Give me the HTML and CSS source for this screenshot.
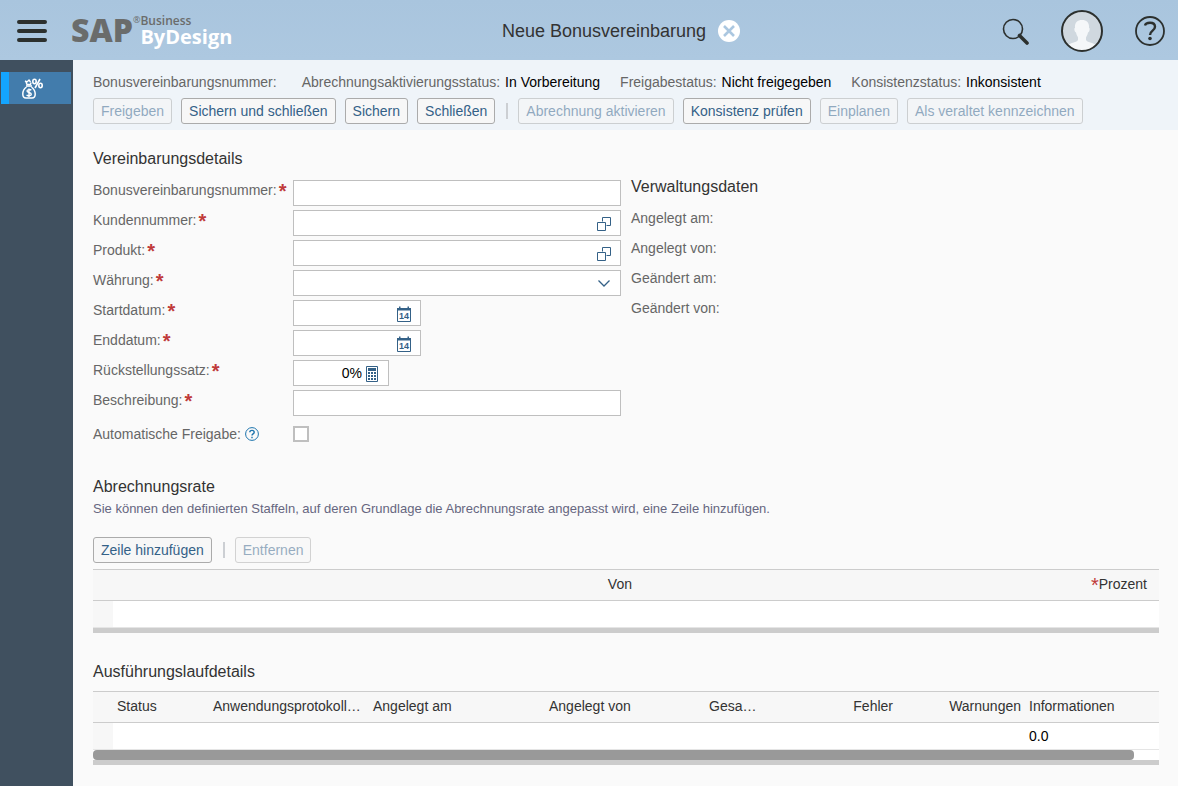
FILE: index.html
```
<!DOCTYPE html>
<html lang="de">
<head>
    <meta charset="UTF-8">
    <meta name="viewport" content="width=device-width, initial-scale=1.0">
    <title>Neue Bonusvereinbarung</title>
    <link rel="stylesheet" href="styles.css">
</head>
<body>
    <!-- Shared icons -->
    <svg class="icon-defs" width="0" height="0" aria-hidden="true">
        <symbol id="icon-value-help" viewBox="0 0 16 16">
            <path d="M6.500 5.500V1.500H14.500V9.500H10.500M1.500 6.500H9.500V14.500H1.500Z" fill="none" stroke="currentColor"/>
        </symbol>
        <symbol id="icon-calendar" viewBox="0 0 16 16">
            <path d="M1.500 2.500H14.500V15.500H1.500Z" fill="none" stroke="currentColor"/>
            <path d="M1 2H15V4.500H1ZM3 0.500H4.500V3H3ZM11.500 0.500H13V3H11.500Z" fill="currentColor"/>
        </symbol>
        <symbol id="icon-calculator" viewBox="0 0 12 16">
            <path d="M0.500 0.500H11.500V15.500H0.500Z" fill="none" stroke="currentColor"/>
            <path d="M2 2H10V5H2Z" fill="currentColor"/>
            <path d="M3 6V14M6 6V14M9 6V14" stroke="currentColor" stroke-width="2" stroke-dasharray="2 1"/>
        </symbol>
    </svg>

    <header class="topbar">
        <button class="icon-button menu-button" aria-label="Menü">
            <svg width="30" height="22" viewBox="0 0 30 22">
                <path d="M2 2H28M2 11H28M2 20H28" stroke="#2c302e" stroke-width="4" stroke-linecap="round"/>
            </svg>
        </button>
        <a class="logo" href="#">
            <span class="logo-sap">SAP</span>
            <span class="logo-reg">®</span>
            <span class="logo-product">
                <span class="logo-business">Business</span>
                <span class="logo-bydesign">ByDesign</span>
            </span>
        </a>
        <div class="page-title">
            <h1>Neue Bonusvereinbarung</h1>
            <button class="icon-button" aria-label="Seite schließen">
                <svg width="22" height="22" viewBox="0 0 22 22">
                    <circle cx="11" cy="11" r="11" fill="#fff"/>
                    <path d="M6 6L16 16M16 6L6 16" stroke="#abc7e0" stroke-width="2.600"/>
                </svg>
            </button>
        </div>
        <div class="topbar-actions">
            <button class="icon-button" aria-label="Suche">
                <svg width="28" height="28" viewBox="0 0 28 28">
                    <circle cx="12" cy="12" r="9.500" fill="none" stroke="#2c302e" stroke-width="1.600"/>
                    <path d="M18.500 18.500L26 26" stroke="#2c302e" stroke-width="3.600" stroke-linecap="round"/>
                </svg>
            </button>
            <button class="icon-button" aria-label="Benutzer">
                <svg width="42" height="42" viewBox="0 0 42 42">
                    <clipPath id="avatar-clip"><circle cx="21" cy="21" r="20"/></clipPath>
                    <circle cx="21" cy="21" r="20" fill="#d0d8df"/>
                    <path clip-path="url(#avatar-clip)" fill="#f5f7f9" d="M21 10C16 10 13.500 13 14 18C12.800 18 13.400 22 15 22.500C15.500 25 16.500 26 17 27.500V30C16 32.500 10 32 6 36V42H36V36C32 32 26 32.500 25 30V27.500C25.500 26 26.500 25 27 22.500C28.600 22 29.200 18 28 18C28.500 13 26 10 21 10Z"/>
                    <circle cx="21" cy="21" r="20" fill="none" stroke="#2c302e" stroke-width="2"/>
                </svg>
            </button>
            <button class="icon-button" aria-label="Hilfe">
                <svg width="30" height="30" viewBox="0 0 30 30">
                    <circle cx="15" cy="15" r="14" fill="none" stroke="#2c302e" stroke-width="1.800"/>
                    <path d="M10 9.500C10.500 7.500 12.500 6.800 15 6.800C18 6.800 20 8.300 20 10.800C20 14.800 15 14.500 15 19" fill="none" stroke="#2c302e" stroke-width="2.400"/>
                    <circle cx="15" cy="22.500" r="1.800" fill="#2c302e"/>
                </svg>
            </button>
        </div>
    </header>

    <div class="layout">
        <nav class="sidebar">
            <a class="sidebar-item" href="#" aria-label="Bonusvereinbarungen">
                <svg width="22" height="22" viewBox="0 0 22 22" fill="none" stroke="#fff">
                    <path d="M3 3L5 4L7 2L8.500 4M4 4L5 6.500H8.500L9 4.500" stroke-width="1.400"/>
                    <path d="M4 8H10" stroke-width="1.600"/>
                    <path d="M4.500 9C1.500 11 0.800 13.500 0.800 16C0.800 18.500 2 20 4 20H10C12 20 13.200 18.500 13.200 16C13.200 13.500 12 11 9.500 9" stroke-width="1.500"/>
                    <path d="M9.300 12.200C8.500 11.300 5 11.200 5 13C5 15 9.300 14 9.300 16.200C9.300 18.200 5.500 18 4.600 16.800M7 10.500V19" stroke-width="1.400"/>
                    <ellipse cx="12.500" cy="3.500" rx="1.700" ry="2.200" stroke-width="1.600"/>
                    <ellipse cx="18.500" cy="7.500" rx="1.700" ry="2.200" stroke-width="1.600"/>
                    <path d="M18 1L13 10" stroke-width="1.600"/>
                </svg>
            </a>
        </nav>

        <div class="page">
            <div class="toolbar">
                <dl class="status-list">
                    <div class="status"><dt>Bonusvereinbarungsnummer:</dt><dd></dd></div>
                    <div class="status"><dt>Abrechnungsaktivierungsstatus:</dt><dd>In Vorbereitung</dd></div>
                    <div class="status"><dt>Freigabestatus:</dt><dd>Nicht freigegeben</dd></div>
                    <div class="status"><dt>Konsistenzstatus:</dt><dd>Inkonsistent</dd></div>
                </dl>
                <div class="button-row">
                    <button class="btn" disabled>Freigeben</button>
                    <button class="btn">Sichern und schließen</button>
                    <button class="btn">Sichern</button>
                    <button class="btn">Schließen</button>
                    <span class="separator"></span>
                    <button class="btn" disabled>Abrechnung aktivieren</button>
                    <button class="btn">Konsistenz prüfen</button>
                    <button class="btn" disabled>Einplanen</button>
                    <button class="btn" disabled>Als veraltet kennzeichnen</button>
                </div>
            </div>

            <main class="content">
                <!-- Agreement details and administrative data -->
                <section class="details">
                    <form class="form">
                        <h2>Vereinbarungsdetails</h2>
                        <div class="form-row">
                            <label class="required" for="number">Bonusvereinbarungsnummer:</label>
                            <div class="field"><input type="text" id="number"></div>
                        </div>
                        <div class="form-row">
                            <label class="required" for="customer">Kundennummer:</label>
                            <div class="field">
                                <input type="text" id="customer">
                                <button type="button" class="field-button" aria-label="Kunde auswählen"><svg width="16" height="16"><use href="#icon-value-help"/></svg></button>
                            </div>
                        </div>
                        <div class="form-row">
                            <label class="required" for="product">Produkt:</label>
                            <div class="field">
                                <input type="text" id="product">
                                <button type="button" class="field-button" aria-label="Produkt auswählen"><svg width="16" height="16"><use href="#icon-value-help"/></svg></button>
                            </div>
                        </div>
                        <div class="form-row">
                            <label class="required" for="currency">Währung:</label>
                            <div class="field field-select">
                                <select id="currency"><option></option></select>
                                <svg width="12" height="8" viewBox="0 0 12 8"><path d="M0.500 1.500L6 7L11.500 1.500" fill="none" stroke="currentColor" stroke-width="1.300"/></svg>
                            </div>
                        </div>
                        <div class="form-row">
                            <label class="required" for="startDate">Startdatum:</label>
                            <div class="field field-date">
                                <input type="text" id="startDate">
                                <button type="button" class="field-button" aria-label="Startdatum auswählen">
                                    <svg class="calendar" width="16" height="16"><use href="#icon-calendar"/><text x="8" y="13" text-anchor="middle">14</text></svg>
                                </button>
                            </div>
                        </div>
                        <div class="form-row">
                            <label class="required" for="endDate">Enddatum:</label>
                            <div class="field field-date">
                                <input type="text" id="endDate">
                                <button type="button" class="field-button" aria-label="Enddatum auswählen">
                                    <svg class="calendar" width="16" height="16"><use href="#icon-calendar"/><text x="8" y="13" text-anchor="middle">14</text></svg>
                                </button>
                            </div>
                        </div>
                        <div class="form-row">
                            <label class="required" for="rate">Rückstellungssatz:</label>
                            <div class="field field-percent">
                                <input type="text" id="rate" value="0%">
                                <button type="button" class="field-button" aria-label="Rechner"><svg width="12" height="16"><use href="#icon-calculator"/></svg></button>
                            </div>
                        </div>
                        <div class="form-row">
                            <label class="required" for="description">Beschreibung:</label>
                            <div class="field"><input type="text" id="description"></div>
                        </div>
                        <div class="form-row form-row-check">
                            <div class="check-label">
                                <label for="autoRelease">Automatische Freigabe:</label>
                                <button type="button" class="icon-button" aria-label="Erklärung">
                                    <svg width="14" height="14" viewBox="0 0 14 14" fill="none" stroke="#1c74ad">
                                        <circle cx="7" cy="7" r="6.400"/>
                                        <path d="M4.800 5.200C4.800 2.700 9.200 2.700 9.200 5.200C9.200 7 7 6.800 7 8.600M7 9.700V11.200" stroke-width="1.400"/>
                                    </svg>
                                </button>
                            </div>
                            <input type="checkbox" id="autoRelease" class="checkbox">
                        </div>
                    </form>

                    <div class="admin-data">
                        <h2>Verwaltungsdaten</h2>
                        <dl>
                            <dt>Angelegt am:</dt>
                            <dt>Angelegt von:</dt>
                            <dt>Geändert am:</dt>
                            <dt>Geändert von:</dt>
                        </dl>
                    </div>
                </section>

                <!-- Settlement rate -->
                <section class="rates">
                    <h2>Abrechnungsrate</h2>
                    <p class="hint">Sie können den definierten Staffeln, auf deren Grundlage die Abrechnungsrate angepasst wird, eine Zeile hinzufügen.</p>
                    <div class="button-row">
                        <button class="btn">Zeile hinzufügen</button>
                        <span class="separator"></span>
                        <button class="btn" disabled>Entfernen</button>
                    </div>
                    <div class="table-wrap">
                        <table>
                            <colgroup>
                                <col class="col-handle">
                                <col>
                                <col>
                            </colgroup>
                            <thead>
                                <tr>
                                    <th></th>
                                    <th class="num">Von</th>
                                    <th class="num col-percent"><span class="star">*</span>Prozent</th>
                                </tr>
                            </thead>
                            <tbody>
                                <tr><td></td><td></td><td></td></tr>
                            </tbody>
                        </table>
                    </div>
                </section>

                <!-- Run details -->
                <section class="runs">
                    <h2>Ausführungslaufdetails</h2>
                    <div class="table-wrap">
                        <table>
                            <colgroup>
                                <col class="col-handle">
                                <col class="col-status">
                                <col class="col-log">
                                <col class="col-created-on">
                                <col class="col-created-by">
                                <col class="col-total">
                                <col class="col-errors">
                                <col class="col-warnings">
                                <col>
                            </colgroup>
                            <thead>
                                <tr>
                                    <th></th>
                                    <th>Status</th>
                                    <th>Anwendungsprotokoll…</th>
                                    <th>Angelegt am</th>
                                    <th>Angelegt von</th>
                                    <th>Gesa…</th>
                                    <th class="num">Fehler</th>
                                    <th class="num">Warnungen</th>
                                    <th>Informationen</th>
                                </tr>
                            </thead>
                            <tbody>
                                <tr><td></td><td></td><td></td><td></td><td></td><td></td><td></td><td></td><td>0.0</td></tr>
                            </tbody>
                        </table>
                        <div class="scrollbar"><div class="scrollbar-thumb"></div></div>
                    </div>
                </section>
            </main>
        </div>
    </div>
</body>
</html>
```
FILE: styles.css
```
* {
    box-sizing: border-box;
}

body {
    font-family: "Liberation Sans", Arial, sans-serif;
    font-size: 14px;
    line-height: 16px;
    background-color: #fafafa;
    margin: 0;
    color: #333;
    display: flex;
    flex-direction: column;
    min-height: 100vh;
}

h1, h2, p, dl, dd {
    margin: 0;
}

h1, h2 {
    font-weight: normal;
}

h2 {
    font-size: 16px;
    line-height: 20px;
}

button, input, select {
    font: inherit;
}

svg {
    display: block;
}

.icon-defs {
    position: absolute;
}

.icon-button {
    padding: 0;
    border: none;
    background: none;
    cursor: pointer;
}

/* Top bar */
.topbar {
    display: grid;
    grid-template-areas: "left title right";
    grid-template-columns: 1fr auto 1fr;
    align-items: center;
    height: 60px;
    padding: 1px 13px 0 17px;
    background: linear-gradient(#a9c5de, #adc8e0);
}

.menu-button {
    grid-area: left;
    justify-self: start;
}

.logo {
    grid-area: left;
    justify-self: start;
    display: flex;
    align-items: flex-start;
    margin-left: 54px;
    font-family: "Open Sans", sans-serif;
    color: #6a6c6b;
    text-decoration: none;
}

.logo-sap {
    font-size: 32px;
    font-weight: 800;
    line-height: 30px;
}

.logo-reg {
    font-size: 9px;
    line-height: 10px;
}

.logo-product {
    display: flex;
    flex-direction: column;
}

.logo-business {
    font-size: 12px;
    font-weight: 600;
    line-height: 12px;
}

.logo-bydesign {
    font-size: 20px;
    font-weight: 700;
    line-height: 20px;
    color: #fff;
}

.page-title {
    grid-area: title;
    display: flex;
    align-items: center;
    gap: 12px;
    margin-left: 60px;
}

.page-title h1 {
    font-size: 18px;
    line-height: 22px;
}

.topbar-actions {
    grid-area: right;
    justify-self: end;
    display: flex;
    align-items: center;
    gap: 32px;
}

/* Layout */
.layout {
    display: flex;
    flex: 1;
}

.sidebar {
    flex: 0 0 73px;
    padding: 12px 2px 0 1px;
    background-color: #40505f;
}

.sidebar-item {
    display: block;
    height: 32px;
    padding: 6px 0 0 13px;
    border-left: 8px solid #14a5ff;
    background-color: #427cac;
}

.page {
    flex: 1;
    min-width: 0;
}

.toolbar {
    padding: 14px 20px 6px;
    background-color: #eff4f9;
}

.status-list {
    display: flex;
    flex-wrap: wrap;
    gap: 0 20px;
    margin-bottom: 8px;
}

.status {
    display: flex;
    gap: 5px;
}

.status dt {
    color: #666;
}

.status dd {
    color: #000;
}

.button-row {
    display: flex;
    flex-wrap: wrap;
    align-items: center;
    gap: 9px;
}

.btn {
    height: 26px;
    padding: 0 7px;
    border: 1px solid #ababab;
    border-radius: 3px;
    background-color: #f7f7f7;
    color: #346187;
    cursor: pointer;
}

.btn:disabled {
    opacity: 0.5;
    cursor: default;
}

.separator {
    width: 2px;
    height: 16px;
    margin: 0 1px 0 2px;
    background-color: #cccfd3;
}

.content {
    padding: 19px 19px 20px 20px;
}

/* Form */
.details {
    display: grid;
    grid-template-columns: minmax(0, 528px) minmax(0, 1fr);
    gap: 10px;
    margin-bottom: 30px;
}

.form h2 {
    margin-bottom: 11px;
}

.form-row {
    display: flex;
    height: 30px;
}

.form-row label {
    flex: 0 0 200px;
    padding-top: 2px;
    color: #666;
}

.required::after {
    content: "*";
    margin-left: 2px;
    font-size: 20px;
    font-weight: bold;
    line-height: 0;
    vertical-align: -3px;
    color: #c03a3a;
}

.field {
    display: flex;
    flex: 1;
    height: 26px;
    min-width: 0;
    border: 1px solid #bfbfbf;
    background-color: #fff;
    color: #346187;
}

.field input,
.field select {
    flex: 1;
    width: 100%;
    min-width: 0;
    padding: 0 8px;
    border: none;
    background: none;
    color: #000;
    appearance: none;
}

.field-button {
    display: flex;
    align-items: center;
    justify-content: center;
    width: 32px;
    padding: 2px 0 0;
    border: none;
    background: none;
    color: #346187;
    cursor: pointer;
}

.calendar text {
    font-size: 9px;
    font-weight: bold;
    fill: currentColor;
}

.field-date {
    flex: 0 0 128px;
}

.field-percent {
    flex: 0 0 96px;
}

.field-percent input {
    padding: 0 4px;
    text-align: right;
}

.field-percent .field-button {
    width: 22px;
    padding-right: 10px;
}

.field-select {
    display: grid;
    align-items: center;
}

.field-select select,
.field-select svg {
    grid-area: 1 / 1;
}

.field-select select {
    height: 24px;
}

.field-select svg {
    justify-self: end;
    margin-right: 10px;
    pointer-events: none;
}

.form-row-check {
    align-items: center;
    height: 27px;
}

.check-label {
    display: flex;
    flex: 0 0 200px;
    align-items: center;
    gap: 4px;
}

.form-row-check label {
    flex: none;
    padding: 0;
}

.checkbox {
    width: 16px;
    height: 16px;
    margin: 0;
    border: 2px solid #bfbfbf;
    background-color: #fff;
    appearance: none;
}

.checkbox:checked {
    background-color: #346187;
}

.admin-data {
    padding-top: 28px;
}

.admin-data dt {
    height: 30px;
    padding-top: 13px;
    color: #666;
}

/* Tables */
.hint {
    margin: 4px 0 20px;
    font-size: 13px;
    color: #666680;
}

.rates .table-wrap {
    margin-top: 6px;
}

.runs {
    margin-top: 29px;
}

.runs h2 {
    margin-bottom: 9px;
}

.table-wrap {
    border-top: 1px solid #ccc;
    border-bottom: 5px solid #ccc;
}

table {
    width: 100%;
    border-collapse: separate;
    border-spacing: 0;
    table-layout: fixed;
}

th, td {
    padding: 0 4px;
    overflow: hidden;
    text-align: left;
    text-overflow: ellipsis;
    white-space: nowrap;
}

th {
    height: 31px;
    padding-bottom: 2px;
    border-bottom: 1px solid #ccc;
    background-color: #f7f7f7;
    font-weight: normal;
}

td {
    height: 27px;
    border-bottom: 1px solid #e5e5e5;
    background-color: #fff;
    color: #000;
}

td:first-child {
    background-color: #f7f7f7;
}

.num {
    text-align: right;
}

.star {
    font-size: 20px;
    line-height: 0;
    vertical-align: -3px;
    color: #c03a3a;
}

.col-percent {
    padding-right: 12px;
}

.col-handle {
    width: 20px;
}

.col-status {
    width: 96px;
}

.col-log,
.col-created-by {
    width: 160px;
}

.col-created-on {
    width: 176px;
}

.col-total {
    width: 56px;
}

.col-errors {
    width: 136px;
}

.col-warnings {
    width: 128px;
}

.scrollbar {
    background-color: #fff;
}

.scrollbar-thumb {
    width: calc(100% - 25px);
    height: 10px;
    border-radius: 4px;
    background-color: #999;
}
```
